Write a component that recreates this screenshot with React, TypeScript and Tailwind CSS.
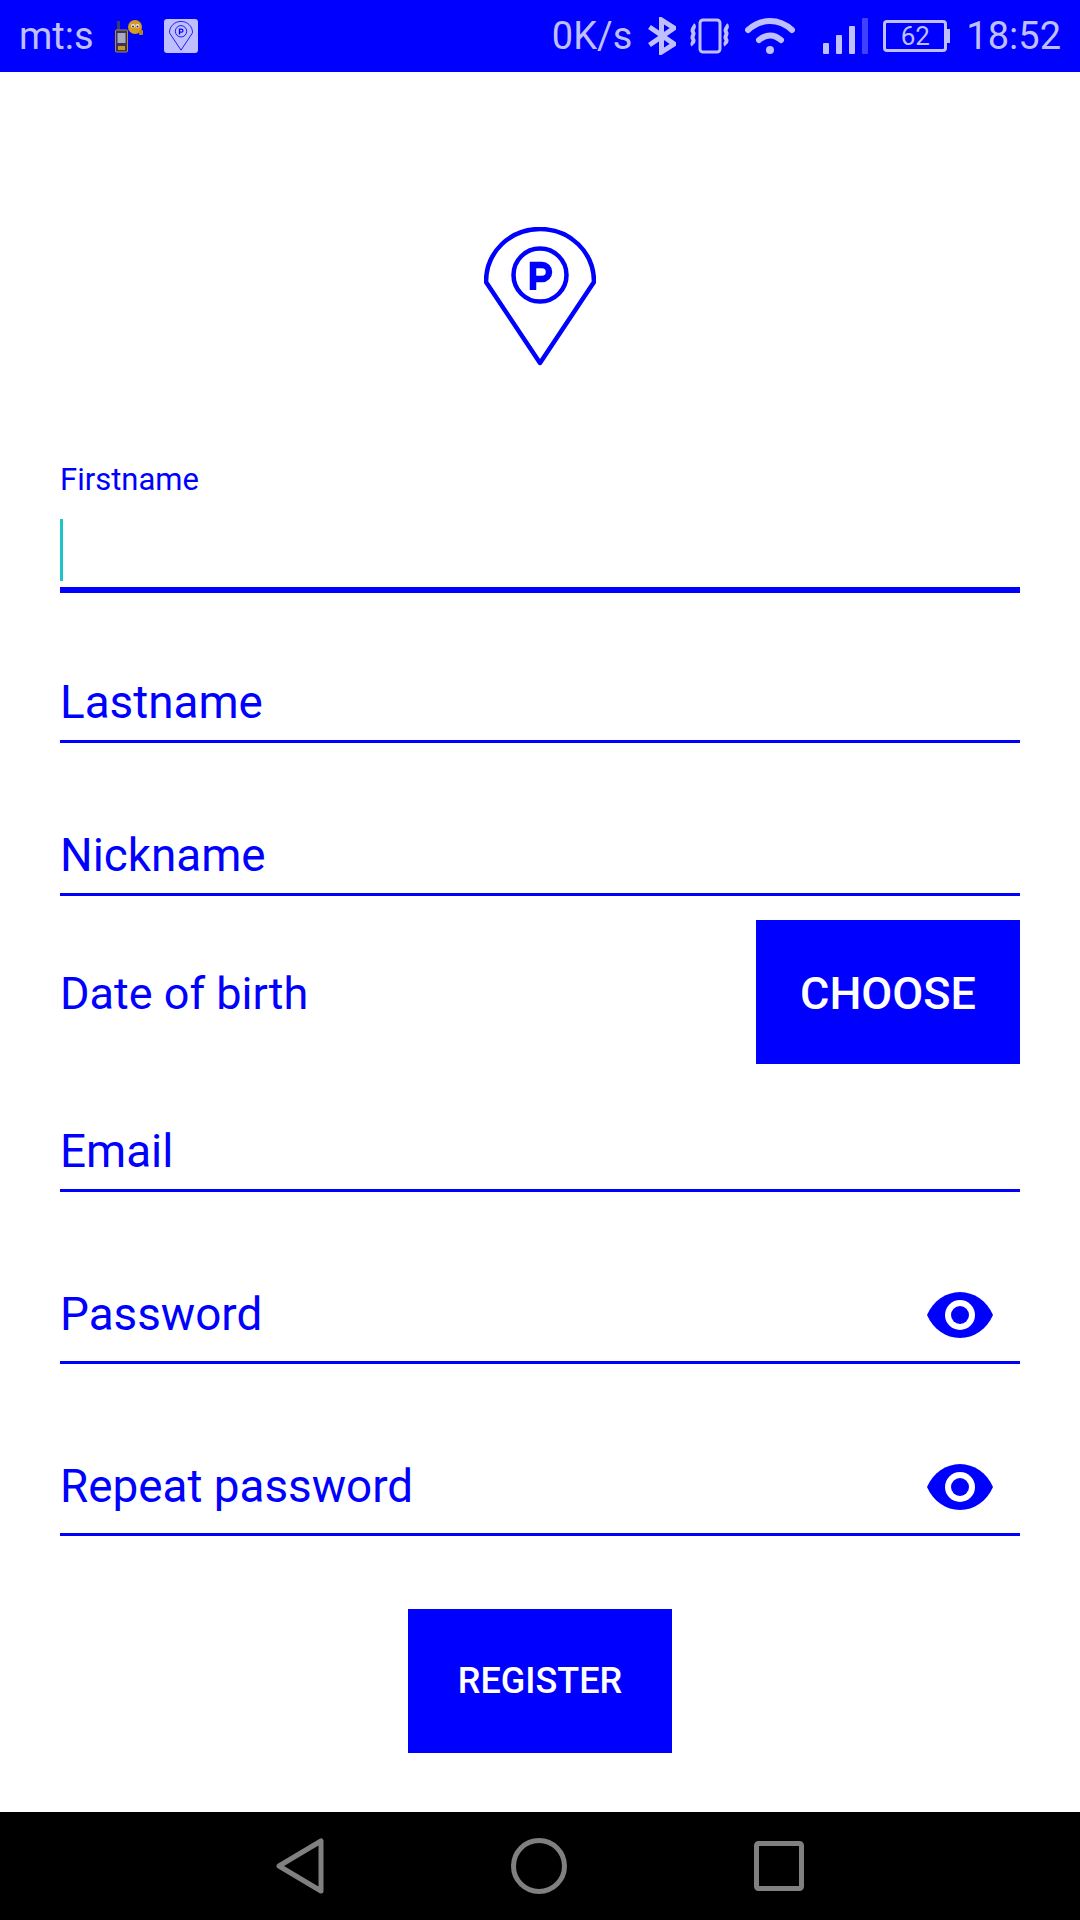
// Registration screen with Android status and navigation bars.
import React from 'react';

const Eye = () => (
  <svg width="66" height="46" viewBox="0 0 66 46" className="shrink-0">
    <path d="M0 23C6 9 19 0 33 0s27 9 33 23C60 37 47 46 33 46S6 37 0 23Z" fill="#0000ff" />
    <circle cx="33" cy="23" r="15" fill="#ffffff" />
    <circle cx="33" cy="23" r="9" fill="#0000ff" />
  </svg>
);

const Pin = ({ size, stroke }: { size: number; stroke: number }) => (
  <svg width={size} height={size * 1.25} viewBox="0 0 112 140" fill="none">
    <path
      d="M2 55C2 25 26 2 56 2S110 25 110 55L56 136Z"
      stroke="#0000ff"
      strokeWidth={stroke}
      strokeLinejoin="round"
    />
    <circle cx="56" cy="48" r="26.5" stroke="#0000ff" strokeWidth={stroke} />
    <path d="M49 63V38h9a7 7 0 0 1 0 14H49" stroke="#0000ff" strokeWidth={stroke + 2} />
  </svg>
);

const GpsBuddy = () => (
  <svg width="28" height="34" viewBox="0 0 28 34" className="shrink-0">
    <rect x="2" y="2" width="3" height="10" fill="#3a3a7a" />
    <rect x="0.5" y="11" width="12" height="22" rx="1" fill="#3b3550" stroke="#b08a40" />
    <rect x="2.5" y="14" width="8" height="10" fill="#a9a9c5" />
    <rect x="3" y="27" width="7" height="4" fill="#c49a30" />
    <circle cx="20" cy="8" r="7" fill="#d69a1e" />
    <circle cx="18" cy="7" r="2" fill="#e8e8f0" />
    <circle cx="22.5" cy="7" r="2" fill="#e8e8f0" />
    <circle cx="18" cy="7.5" r="1" fill="#333355" />
    <circle cx="22.5" cy="7.5" r="1" fill="#333355" />
    <rect x="24" y="11" width="4" height="5" rx="1" fill="#b98518" />
  </svg>
);

const StatusBar = () => (
  <div className="h-[72px] shrink-0 bg-[#0000ff] flex items-center pl-[19px] pr-[19px] text-[#bfbfff] text-[38px] leading-none">
    <span>mt:s</span>
    <div className="ml-[21px]"><GpsBuddy /></div>
    <div className="ml-[21px] w-[34px] h-[34px] rounded-[3px] bg-[#bfbfff] flex items-center justify-center">
      <Pin size={24} stroke={4} />
    </div>
    <div className="flex-1" />
    <span>0K/s</span>
    <svg width="28" height="38" viewBox="0 0 28 38" fill="none" stroke="#bfbfff" strokeWidth="5" className="ml-[16px]">
      <path d="M1.5 10L26 27 13.5 35V3L26 11 1.5 28" />
    </svg>
    <svg width="40" height="36" viewBox="0 0 40 36" fill="none" stroke="#bfbfff" strokeWidth="3" className="ml-[14px]">
      <rect x="10" y="2" width="20" height="32" rx="3" />
      <path strokeWidth="4" d="M3 7c3 2 -2 4 0 7s-2 4 0 7 -2 4 0 6M36 7c3 2 -2 4 0 7s-2 4 0 7 -2 4 0 6" />
    </svg>
    <svg width="50" height="36" viewBox="0 0 50 36" fill="none" stroke="#bfbfff" strokeWidth="6" strokeLinecap="round" className="ml-[15px]">
      <path d="M3 12c13-12 31-12 44 0" />
      <path d="M14 22c7-6 15-6 22 0" />
      <circle cx="25" cy="32" r="4" fill="#bfbfff" stroke="none" />
    </svg>
    <div className="ml-[28px] flex items-end gap-[7px] h-[36px]">
      <div className="w-[6px] h-[11px] rounded-[1px] bg-[#bfbfff]" />
      <div className="w-[6px] h-[19px] rounded-[1px] bg-[#bfbfff]" />
      <div className="w-[6px] h-[28px] rounded-[1px] bg-[#bfbfff]" />
      <div className="w-[6px] h-[36px] rounded-[1px] bg-[#4040ff]" />
    </div>
    <div className="ml-[15px] flex items-center">
      <div className="w-[64px] h-[32px] rounded-[4px] border-[3px] border-[#bfbfff] flex items-center justify-center text-[26px]">62</div>
      <div className="w-[3px] h-[14px] bg-[#bfbfff]" />
    </div>
    <span className="ml-[16px]">18:52</span>
  </div>
);

const Field = ({ label, eye, className }: { label: string; eye?: boolean; className: string }) => (
  <div className={`${className} flex items-center justify-between border-b-[3px] border-[#0000ff] text-[45.8px] leading-none text-[#0000ff]`}>
    <span>{label}</span>
    {eye ? <div className="mr-[27px]"><Eye /></div> : null}
  </div>
);

const NavBar = () => (
  <div className="h-[108px] shrink-0 bg-black flex items-center justify-center gap-[187px]">
    <svg width="48" height="56" viewBox="0 0 48 56" fill="none" stroke="#808080" strokeWidth="5" strokeLinejoin="round">
      <path d="M45 3v50L3 28Z" />
    </svg>
    <svg width="56" height="56" viewBox="0 0 56 56" fill="none" stroke="#808080" strokeWidth="5">
      <circle cx="28" cy="28" r="25.5" />
    </svg>
    <svg width="50" height="50" viewBox="0 0 50 50" fill="none" stroke="#808080" strokeWidth="5" strokeLinejoin="round">
      <rect x="2.5" y="2.5" width="45" height="45" rx="2" />
    </svg>
  </div>
);

export default function App() {
  return (
    <div className="w-[1080px] h-[1920px] bg-white flex flex-col font-['Roboto',sans-serif]">
      <StatusBar />
      <div className="flex-1 flex flex-col px-[60px]">
        <div className="h-[140px] shrink-0 mt-[155px] flex justify-center">
          <Pin size={112} stroke={4.5} />
        </div>
        <div className="mt-[95px] text-[31px] leading-[36px] text-[#0000ff]">Firstname</div>
        <div className="mt-[21px] h-[74px] flex flex-col border-b-[6px] border-[#0000ff]">
          <div className="w-[3px] h-[62px] bg-[#1fc4c8]" />
        </div>
        <Field label="Lastname" className="mt-[72px] h-[78px]" />
        <Field label="Nickname" className="mt-[75px] h-[78px]" />
        <div className="mt-[24px] h-[144px] flex items-center justify-between">
          <span className="pt-[2px] text-[45px] leading-none text-[#0000ff]">Date of birth</span>
          <button className="w-[264px] h-[144px] pt-[3px] bg-[#0000ff] text-white text-[45px] font-medium">CHOOSE</button>
        </div>
        <Field label="Email" className="mt-[50px] h-[78px]" />
        <Field label="Password" eye className="mt-[76px] h-[96px]" />
        <Field label="Repeat password" eye className="mt-[76px] h-[96px]" />
        <div className="mt-[73px] flex justify-center">
          <button className="w-[264px] h-[144px] bg-[#0000ff] text-white text-[36px] font-medium">REGISTER</button>
        </div>
      </div>
      <NavBar />
    </div>
  );
}
